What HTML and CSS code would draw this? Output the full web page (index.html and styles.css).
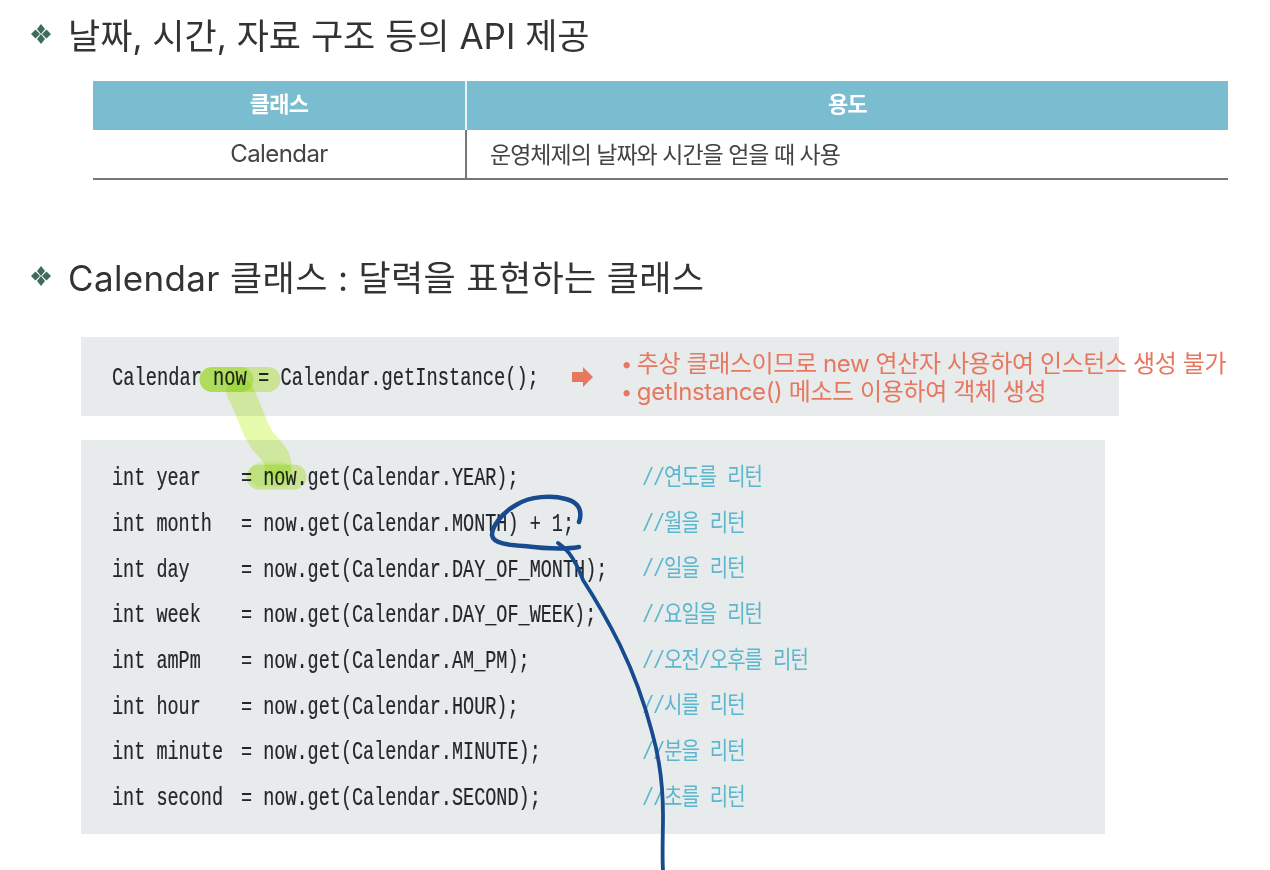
FILE: index.html
```html
<!DOCTYPE html>
<html lang="ko">
<head>
<meta charset="utf-8">
<title>Calendar 클래스</title>
<link rel="stylesheet" href="styles.css">
</head>
<body>
<main class="page">
  <h2 class="heading">
    <svg class="bullet" viewBox="0 0 22 22"><path d="M11 1l4 5-4 5-4-5zM5.500 6.500l4.500 4.500-4.500 4.500L1 11zM16.500 6.500L21 11l-4.500 4.500L12 11zM11 11l4 5-4 5-4-5z"/></svg>
    <span>날짜, 시간, 자료 구조 등의 API 제공</span>
  </h2>
  <table class="api-table">
    <thead><tr><th class="col-a">클래스</th><th>용도</th></tr></thead>
    <tbody><tr><td class="cell-name">Calendar</td><td class="cell-desc">운영체제의 날짜와 시간을 얻을 때 사용</td></tr></tbody>
  </table>
  <h2 class="heading heading-second">
    <svg class="bullet" viewBox="0 0 22 22"><path d="M11 1l4 5-4 5-4-5zM5.500 6.500l4.500 4.500-4.500 4.500L1 11zM16.500 6.500L21 11l-4.500 4.500L12 11zM11 11l4 5-4 5-4-5z"/></svg>
    <span>Calendar 클래스 : 달력을 표현하는 클래스</span>
  </h2>
  <section class="box box-top">
    <code class="code code-top">Calendar now = Calendar.getInstance();</code>
    <svg class="arrow" viewBox="0 0 22 20"><path d="M0 5h11V0l10 10-10 10v-5H0z"/></svg>
    <ul class="notes">
      <li>추상 클래스이므로 new 연산자 사용하여 인스턴스 생성 불가</li>
      <li>getInstance() 메소드 이용하여 객체 생성</li>
    </ul>
  </section>
  <section class="box box-code">
    <div class="row"><code class="code">int year</code><code class="code">= now.get(Calendar.YEAR);</code><span class="comment">//연도를 리턴</span></div>
    <div class="row"><code class="code">int month</code><code class="code">= now.get(Calendar.MONTH) + 1;</code><span class="comment">//월을 리턴</span></div>
    <div class="row"><code class="code">int day</code><code class="code">= now.get(Calendar.DAY_OF_MONTH);</code><span class="comment">//일을 리턴</span></div>
    <div class="row"><code class="code">int week</code><code class="code">= now.get(Calendar.DAY_OF_WEEK);</code><span class="comment">//요일을 리턴</span></div>
    <div class="row"><code class="code">int amPm</code><code class="code">= now.get(Calendar.AM_PM);</code><span class="comment">//오전/오후를 리턴</span></div>
    <div class="row"><code class="code">int hour</code><code class="code">= now.get(Calendar.HOUR);</code><span class="comment">//시를 리턴</span></div>
    <div class="row"><code class="code">int minute</code><code class="code">= now.get(Calendar.MINUTE);</code><span class="comment">//분을 리턴</span></div>
    <div class="row"><code class="code">int second</code><code class="code">= now.get(Calendar.SECOND);</code><span class="comment">//초를 리턴</span></div>
  </section>
  <svg class="ink" viewBox="0 0 1270 870">
    <path class="marker" d="M212 379.500H268"/>
    <path class="marker" d="M212 379.500H241"/>
    <path class="marker marker-light" d="M240 392C250 410 252 425 262 440C270 450 278 455 278 466"/>
    <path class="marker" d="M259 477H294"/>
    <path class="marker marker-soft" d="M262 474H280"/>
    <path class="pen" d="M579 522C583 510 578 502 566 499C552 495 530 496 516 505C502 513 492 526 492 535C493 544 510 545 524 546C540 548 562 550 579 547"/>
    <path class="pen pen-thin" d="M558 543C562 546 572 551 583 580C596 600 610 625 620 645C635 676 645 705 652 732C660 760 663 790 663 815C663 835 662 855 663 870"/>
  </svg>
</main>
</body>
</html>
```
FILE: styles.css
```css
* { box-sizing: border-box; }
html, body { margin: 0; padding: 0; background: #fff; }
body { font-family: "Inter", "Noto Sans CJK KR", sans-serif; overflow: hidden; }
.page { position: relative; width: 1270px; height: 870px; padding-top: 9px; }

.heading {
  display: flex; align-items: center; gap: 16px;
  height: 50px; margin: 0; padding-left: 30px;
  font-size: 35px; font-weight: 400; color: #333; letter-spacing: 0;
  white-space: nowrap;
}
.heading span { margin-bottom: 2px; }
.heading-second { margin-top: 71px; letter-spacing: 0.35px; }
.bullet { width: 22px; height: 22px; flex: none; fill: #3f6b5c; }

.api-table {
  width: 1135px; height: 99px; margin: 22px 0 0 93px;
  border-collapse: collapse; table-layout: fixed;
  filter: blur(0.4px);
}
.api-table th {
  height: 49px; padding: 0 0 7px; background: #7bbdd0; color: #fff;
  font-size: 22px; font-weight: 700; letter-spacing: -0.8px;
}
.col-a { width: 373px; border-right: 2px solid #e8f4f7; }
.api-table td {
  height: 49px; padding: 0 0 2px; color: #444;
  border-bottom: 2px solid #777;
}
.cell-name { text-align: center; font-size: 24px; letter-spacing: -0.6px; border-right: 2px solid #777; }
.api-table .cell-desc { padding-left: 23px; font-size: 23px; letter-spacing: -1px; }

.box { background: #e7ebec; margin-left: 81px; }
.box-top {
  display: flex; align-items: center;
  width: 1038px; height: 79px; margin-top: 36px; padding-left: 31px;
}
.box-code {
  width: 1024px; height: 394px; margin-top: 24px; padding: 16px 0 0 31px;
}
.code {
  display: block; flex: none;
  font-family: "Liberation Mono", monospace;
  font-size: 18.500px; color: #23262b; white-space: pre;
  transform: scaleY(1.35); filter: blur(0.3px);
  -webkit-text-stroke: 0.15px #23262b;
}
.code-top { width: 427px; margin-top: 2px; font-size: 18.730px; }
.arrow { width: 22px; height: 20px; margin: 0 0 0 33px; flex: none; fill: #e8775f; }
.notes {
  list-style: none; margin: 3px 0 0 27px; padding: 0; flex: none;
  font-size: 24px; line-height: 27px; color: #e8775f; white-space: nowrap; letter-spacing: -0.4px;
}
.notes li::before { content: "•"; font-size: 20px; margin-right: 5px; vertical-align: 1px; }

.row { display: grid; grid-template-columns: 129px 401px auto; align-items: center; height: 45.700px; }
.comment {
  font-family: "Liberation Mono", "Noto Sans CJK KR", monospace;
  font-size: 20px; color: #5bb6ce; letter-spacing: -1px; white-space: nowrap; margin-bottom: 9px;
  transform: scaleY(1.2); transform-origin: left center; filter: blur(0.35px);
}

.ink { position: absolute; left: 0; top: 0; width: 1270px; height: 870px; pointer-events: none; }
.marker { fill: none; stroke: #b9ee2c; stroke-opacity: 0.45; stroke-width: 25px; stroke-linecap: round; stroke-linejoin: round; mix-blend-mode: multiply; }
.marker-light { stroke: #c4f53a; stroke-opacity: 0.42; stroke-width: 27px; }
.marker-soft { stroke-opacity: 0.18; }
.pen { fill: none; stroke: #174a8e; stroke-width: 4.500px; stroke-linecap: round; stroke-linejoin: round; }
.pen-thin { stroke-width: 3.800px; }
```
